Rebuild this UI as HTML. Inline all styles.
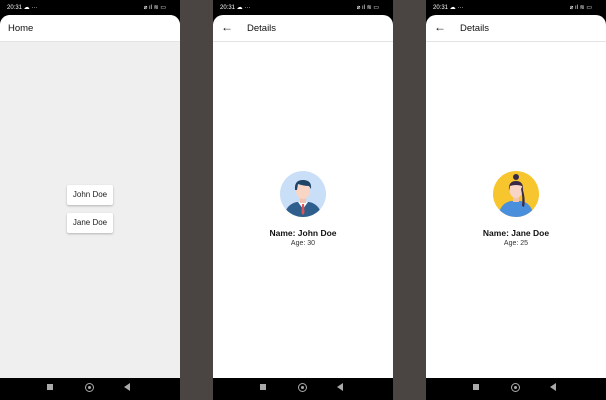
<!DOCTYPE html><html><head><style>
*{margin:0;padding:0;box-sizing:border-box}
body{width:606px;height:400px;background:#4a4543;position:relative;overflow:hidden;font-family:"Liberation Sans",sans-serif}
.ph{position:absolute;top:0;width:180px;height:400px;background:#000}
.sb{position:absolute;top:4px;left:7px;color:#fff;font-size:6px}
.sbr{position:absolute;top:4px;right:14px;color:#fff;font-size:6px}
.scr{position:absolute;top:15px;left:0;width:180px;height:363px;background:#fff;border-radius:10px 10px 0 0;overflow:hidden}
.bar{height:27px;border-bottom:1px solid #e4e4e4;font-size:9.5px;color:#111;padding:8px 0 0 8px;position:relative}
.ar{position:absolute;left:8px;top:5px;font-size:12px}
.nav{position:absolute;top:378px;left:0;width:180px;height:22px}
.sq{position:absolute;left:47px;top:6px;width:6px;height:6px;background:#aaa}
.ci{position:absolute;left:85px;top:5px;width:9px;height:9px;border:1.5px solid #aaa;border-radius:50%}
.ci:after{content:"";position:absolute;left:1.5px;top:1.5px;width:3px;height:3px;background:#aaa;border-radius:50%}
.tr{position:absolute;left:124px;top:5px;border-right:6px solid #aaa;border-top:4px solid transparent;border-bottom:4px solid transparent}
.btn{position:absolute;left:67px;width:46px;height:20px;background:#fff;border-radius:2px;box-shadow:0 1px 2px rgba(0,0,0,.25);font-size:8px;color:#222;text-align:center;line-height:20px}
.nm{position:absolute;top:213px;width:180px;text-align:center;font-size:8.5px;font-weight:bold;color:#111}
.ag{position:absolute;top:225px;width:180px;text-align:center;font-size:7px;color:#333}
</style></head><body>
<div class="ph" style="left:0">
<div class="sb">20:31 ☁ ···</div><div class="sbr">⌀ ıl ≋ ▭</div>
<div class="scr" style="background:#efefef"><div class="bar" style="background:#fff">Home</div>
<div class="btn" style="top:170px">John Doe</div><div class="btn" style="top:198px">Jane Doe</div></div>
<div class="nav"><div class="sq"></div><div class="ci"></div><div class="tr"></div></div></div>

<div class="ph" style="left:213px">
<div class="sb">20:31 ☁ ···</div><div class="sbr">⌀ ıl ≋ ▭</div>
<div class="scr"><div class="bar" style="padding-left:34px"><span class="ar">←</span>Details</div>
<svg style="position:absolute;left:67px;top:156px" width="46" height="46" viewBox="0 0 46 46">
<defs><clipPath id="c1"><circle cx="23" cy="23" r="23"/></clipPath></defs>
<circle cx="23" cy="23" r="23" fill="#c9def7"/>
<g clip-path="url(#c1)">
<path d="M4 46 Q6 33 17 31 L29 31 Q40 33 42 46Z" fill="#2f5f8c"/>
<path d="M18 31 L23 38 L28 31Z" fill="#fff"/>
<path d="M22 33 L24 33 L24.5 42 L23 44 L21.5 42Z" fill="#d55"/>
<rect x="20" y="24" width="6" height="8" fill="#f2c4b0"/>
<ellipse cx="23" cy="20" rx="7" ry="8" fill="#f8d5c4"/>
<path d="M15 19 Q14 9 23 9 Q32 9 31 18 L29 15 Q24 15 18 13 L17 19Z" fill="#1e4466"/>
</g></svg>
<div class="nm">Name: John Doe</div><div class="ag">Age: 30</div></div>
<div class="nav"><div class="sq"></div><div class="ci"></div><div class="tr"></div></div></div>

<div class="ph" style="left:426px">
<div class="sb">20:31 ☁ ···</div><div class="sbr">⌀ ıl ≋ ▭</div>
<div class="scr"><div class="bar" style="padding-left:34px"><span class="ar">←</span>Details</div>
<svg style="position:absolute;left:67px;top:156px" width="46" height="46" viewBox="0 0 46 46">
<defs><clipPath id="c2"><circle cx="23" cy="23" r="23"/></clipPath></defs>
<circle cx="23" cy="23" r="23" fill="#f7c52e"/>
<g clip-path="url(#c2)">
<path d="M5 46 Q7 32 18 30 L28 30 Q39 32 41 46Z" fill="#4a8fdc"/>
<rect x="20" y="24" width="6" height="7" fill="#f2c4b0"/>
<ellipse cx="23" cy="19" rx="6.5" ry="8" fill="#f8d5c4"/>
<path d="M16 20 Q15 10 23 10 Q31 10 30 20 L29 15 Q23 13 17 15Z" fill="#3a2a4a"/>
<circle cx="23" cy="6" r="3" fill="#3a2a4a"/>
<path d="M29 16 Q33 28 31 36 L29 35 Q30 26 28 18Z" fill="#3a2a4a"/>
</g></svg>
<div class="nm">Name: Jane Doe</div><div class="ag">Age: 25</div></div>
<div class="nav"><div class="sq"></div><div class="ci"></div><div class="tr"></div></div></div>
</body></html>
